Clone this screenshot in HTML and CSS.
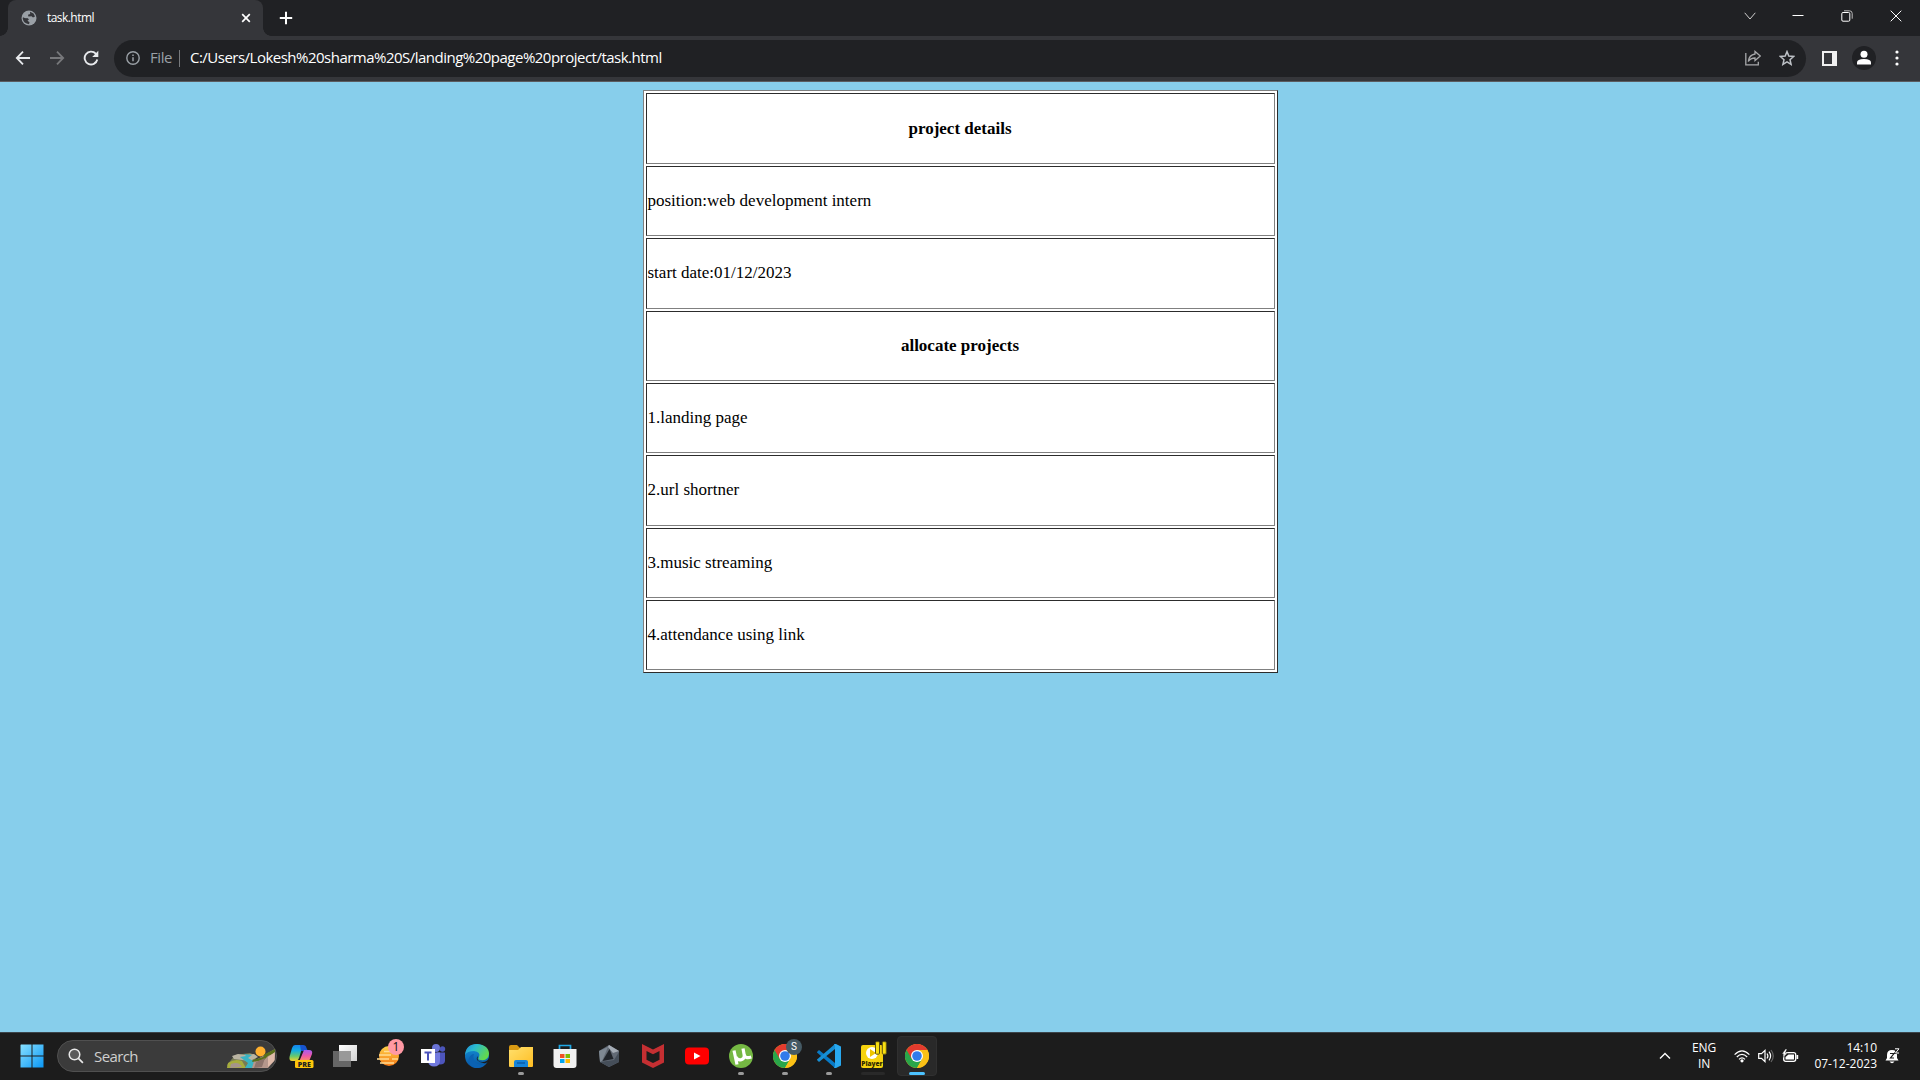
FILE: index.html
```html
<!DOCTYPE html>
<html lang="en">
<head>
<meta charset="utf-8">
<title>task.html</title>
<link rel="stylesheet" href="styles.css">
</head>
<body>
<header class="browser">
  <div class="tabstrip">
    <div class="tab">
      <svg class="globe" width="16" height="16" viewBox="0 0 16 16"><circle cx="8" cy="8" r="7.5" fill="#9aa0a6"/><path d="M2 7.200Q4.500 8.500 6.200 8L8 9.200 6.500 10.800 8.500 12.200 8 14.200Q2.500 13.500 1.700 8.500zM9 1.800L12.500 3.400 14 6.400 12 7.600 10.500 6.200 7.400 6.600 7 4.800 9.200 4z" fill="#35363a"/></svg>
      <span class="tab-title">task.html</span>
      <svg class="tab-close" width="10" height="10" viewBox="0 0 10 10"><path d="M1.2 1.2l7.6 7.6M8.8 1.2L1.2 8.8" stroke="#fff" stroke-width="1.7"/></svg>
    </div>
    <svg class="newtab" width="14" height="14" viewBox="0 0 14 14"><path d="M7 .8v12.4M.8 7h12.4" stroke="#fff" stroke-width="2"/></svg>
    <div class="window-controls">
      <svg width="12" height="12" viewBox="0 0 12 12"><path d="M.7 2.8L6 9l5.3-6.2" fill="none" stroke="#d0d0d0" stroke-width="1"/></svg>
      <svg width="12" height="12" viewBox="0 0 12 12"><path d="M.5 5.5h11" stroke="#fff"/></svg>
      <svg width="12" height="12" viewBox="0 0 12 12"><rect x=".8" y="2.5" width="8" height="8.7" rx="1.2" fill="none" stroke="#fff"/><path d="M3 .8h5.5q2.7 0 2.7 2.7v5.2" fill="none" stroke="#bbb"/></svg>
      <svg width="12" height="12" viewBox="0 0 12 12"><path d="M.7.7l10.6 10.6M11.3.7L.7 11.3" stroke="#fff"/></svg>
    </div>
  </div>
  <div class="toolbar">
    <svg class="nav" width="16" height="16" viewBox="0 0 16 16"><path d="M15 8H2.5M8 1.7L1.8 8 8 14.3" fill="none" stroke="#e8eaed" stroke-width="1.8"/></svg>
    <svg class="nav" width="16" height="16" viewBox="0 0 16 16"><path d="M1 8h12.500M8 1.700L14.200 8 8 14.300" fill="none" stroke="#77787b" stroke-width="1.8"/></svg>
    <svg class="nav" width="16" height="16" viewBox="0 0 16 16"><path d="M14.300 9.500A6.400 6.400 0 1 1 12.800 3.700L14 5" fill="none" stroke="#e8eaed" stroke-width="1.900"/><path d="M15.300.8v6.100H9.200z" fill="#e8eaed"/></svg>
    <div class="omnibox">
      <svg width="14" height="14" viewBox="0 0 14 14"><circle cx="7" cy="7" r="6.200" fill="none" stroke="#9aa0a6" stroke-width="1.400"/><path d="M7 6.200v4M7 3.500V5" stroke="#9aa0a6" stroke-width="1.500"/></svg>
      <span class="scheme">File</span>
      <span class="divider"></span>
      <span class="url">C:/Users/Lokesh%20sharma%20S/landing%20page%20project/task.html</span>
      <svg class="share" width="16" height="16" viewBox="0 0 16 16"><path d="M.8 3v11.800h12.500v-3" fill="none" stroke="#a7a8aa" stroke-width="1.300"/><path d="M10 4V1.500L15.300 6 10 10.500V8Q5.500 8 3.300 11.500 4 5 10 4z" fill="none" stroke="#a7a8aa" stroke-width="1.300"/></svg>
      <svg class="star" width="16" height="16" viewBox="0 0 16 16"><path d="M8 1.600l1.800 4.500 4.900.4-3.700 3.200 1.100 4.700L8 11.900l-4.100 2.500L5 9.700 1.300 6.500l4.900-.4z" fill="none" stroke="#bdc1c6" stroke-width="1.500"/></svg>
    </div>
    <svg class="panel" width="15" height="15" viewBox="0 0 15 15"><path fill="#f1f1f1" d="M0 0h15v15H0z"/><path fill="#35363a" d="M2 2h8v11H2z"/></svg>
    <svg class="avatar" width="24" height="24" viewBox="0 0 24 24"><circle cx="12" cy="12" r="12" fill="#202124"/><circle cx="12" cy="8.300" r="3.500" fill="#fff"/><path d="M5 18.500v-2Q5 13 12 13t7 3.500v2z" fill="#fff"/></svg>
    <svg class="dots" width="4" height="16" viewBox="0 0 4 16"><g fill="#fff"><circle cx="2" cy="2" r="1.600"/><circle cx="2" cy="8" r="1.600"/><circle cx="2" cy="14" r="1.600"/></g></svg>
  </div>
</header>

<main class="page">
  <table class="details" border="1">
    <tr class="tall first"><th>project details</th></tr>
    <tr><td>position:web development intern</td></tr>
    <tr class="tall"><td>start date:01/12/2023</td></tr>
    <tr><th>allocate projects</th></tr>
    <tr><td>1.landing page</td></tr>
    <tr class="tall"><td>2.url shortner</td></tr>
    <tr><td>3.music streaming</td></tr>
    <tr><td>4.attendance using link</td></tr>
  </table>
</main>

<footer class="taskbar">
  <svg class="start" width="24" height="24" viewBox="0 0 24 24"><defs><linearGradient id="win" x2="1" y2="1" gradientUnits="userSpaceOnUse" x1="0" y1="0" gradientTransform="scale(24)"><stop stop-color="#8be2ff"/><stop offset="1" stop-color="#0795f5"/></linearGradient></defs><path fill="url(#win)" d="M1 .5h10.500V11.500H.5V1zM12.500.5h11v11h-11zM.5 12.500h11v11h-11zM12.500 12.500h11v11h-11z"/></svg>
  <div class="search">
    <svg width="16" height="16" viewBox="0 0 16 16"><circle cx="6.500" cy="6.500" r="5.300" fill="#5a5a5a" stroke="#e8e8e8" stroke-width="1.500"/><path d="M10.400 10.400l4.500 4.500" stroke="#e8e8e8" stroke-width="1.700"/></svg>
    <span>Search</span>
    <svg class="scene" width="50" height="26" viewBox="0 0 50 26"><circle cx="34.500" cy="8.500" r="5" fill="#ffb02e"/><path d="M1 22L9 12 24 10 31 13 25 25H2z" fill="#777b55"/><path d="M6 13L12 11l8 1 8-1 4 3-8 4-16-2z" fill="#b9b3a2"/><path d="M2 20q7-5 14-2l4 7H1z" fill="#a7ad3d"/><path d="M5 21q8-3 11 3l-12 1z" fill="#a5948c"/><path d="M18 11l8 1-4 3 7 4-2 6h-8l3-5-8-6 6-1z" fill="#39b4c4"/><path d="M26 25l2-7 9-5 12-7v11l-7 8z" fill="#b5978c"/><path d="M27 17l10-3 2-3 10-5v4l-7 3-4 4-12 2z" fill="#59701c"/><path d="M30 19l9-4-3 9-8 1z" fill="#8d746c"/><path d="M42 14l7-5-1 9-6 6z" fill="#dfbbaa"/></svg>
  </div>
  <nav class="apps">
    <div class="app"><svg width="26" height="26" viewBox="0 0 26 26"><defs><linearGradient id="co" x1="0" y1="0" x2="0" y2="1"><stop stop-color="#1683ed"/><stop offset=".35" stop-color="#12aee2"/><stop offset=".7" stop-color="#69c96b"/><stop offset="1" stop-color="#f4d22e"/></linearGradient><linearGradient id="cp" x1="0" y1="0" x2="0" y2="1"><stop stop-color="#a75cf0"/><stop offset=".5" stop-color="#ef59a7"/><stop offset="1" stop-color="#ff9b55"/></linearGradient></defs><path d="M7 2h8l-4 13q-1 3-4 3H4Q1 18 1.500 14L4 5Q5 2 7 2z" fill="url(#co)"/><path d="M12 2h3q3 0 3.500 3L20 8h-7z" fill="#1754cf"/><path d="M16 7h5q4 0 3 4l-2 5q-1 3-4 3h-7z" fill="url(#cp)"/><rect x="7" y="17" width="18.500" height="8" rx="1.500" fill="#ffc60a"/><text x="16.250" y="23.700" text-anchor="middle" class="pre">PRE</text></svg></div>
    <div class="app"><svg width="26" height="26" viewBox="0 0 26 26"><defs><linearGradient id="tv" x2="1" y2="1"><stop stop-color="#fff"/><stop offset="1" stop-color="#d2d2d2"/></linearGradient></defs><path d="M7 2h18v16H7z" fill="url(#tv)"/><path d="M1 8h18v16H1z" fill="#666"/><path d="M7 8h12v10H7z" fill="#999"/></svg></div>
    <div class="app"><svg width="28" height="28" viewBox="0 0 28 28"><defs><linearGradient id="sun" x2="0" y2="1"><stop stop-color="#ffd24a"/><stop offset="1" stop-color="#f47a16"/></linearGradient></defs><circle cx="14" cy="14" r="10" fill="url(#sun)"/><path d="M4 13h12M2 17h12M5 21h14M9 9.500h8M17 17h6" stroke="#ffdc91" stroke-width="1.600"/></svg><span class="badge">1</span></div>
    <div class="app"><svg width="26" height="26" viewBox="0 0 26 26"><circle cx="16" cy="5" r="4" fill="#6a73d5"/><circle cx="22.500" cy="6" r="2.700" fill="#4b55ba"/><path d="M17 9.500h8v8q0 4-5 4h-4z" fill="#4d55bd"/><path d="M8 9.500h12v8q0 6-6 6-5 0-6-5z" fill="#7179de"/><path d="M1 6h14v14H1z" fill="#fff"/><path d="M4.500 9.500h7M8 9.500v8" stroke="#4b53bc" stroke-width="2"/></svg></div>
    <div class="app"><svg width="24" height="24" viewBox="0 0 24 24"><defs><linearGradient id="e1" x2="1" y2=".5"><stop stop-color="#2189d8"/><stop offset=".4" stop-color="#29bad1"/><stop offset="1" stop-color="#62d94c"/></linearGradient><linearGradient id="e2" x2="0" y2="1"><stop stop-color="#1695dd"/><stop offset="1" stop-color="#0753a0"/></linearGradient></defs><circle cx="12" cy="12" r="12" fill="url(#e2)"/><path d="M0 11Q1 0 12 0 24 1 24 10q-1 7-8 6-4 0-2-3 2-5-5-6-7 0-9 4z" fill="url(#e1)"/><path d="M9 10q-2 5 2 9 6 4 11-1-4 7-12 6-8-3-6-10 2-4 5-4z" fill="#0b62b3"/><path d="M13 12q-2 6 5 6 4 0 6-4l0 3-3 2q-5 1-9-3-1-2 1-4z" fill="#1c1c1c"/></svg></div>
    <div class="app running"><svg width="24" height="24" viewBox="0 0 24 24"><defs><linearGradient id="fo" x2="1" y2="1"><stop stop-color="#ffe06e"/><stop offset="1" stop-color="#ffbd22"/></linearGradient></defs><path d="M0 3q0-2 2-2h6l3 3v5H0z" fill="#d99a13"/><path d="M0 6h9l3-3h12v19q0 1-1 1H1q-1 0-1-1z" fill="url(#fo)"/><path d="M5 23v-5q0-2 2-2h10q2 0 2 2v5z" fill="#1784d8"/><path d="M8 19h8" stroke="#0c5da9" stroke-width="1.500"/></svg></div>
    <div class="app"><svg width="24" height="26" viewBox="0 0 24 26"><path d="M6.500 7V2.500h11V7" fill="none" stroke="#20a8e5" stroke-width="1.700"/><path d="M.5 6h23v16q0 3-3 3h-17q-3 0-3-3z" fill="#f1f1f1"/><path fill="#f25022" d="M7 11h4.500v4H7z"/><path fill="#7fba00" d="M12.500 11H17v4h-4.500z"/><path fill="#00a4ef" d="M7 16h4.500v4H7z"/><path fill="#ffb900" d="M12.500 16H17v4h-4.500z"/></svg></div>
    <div class="app"><svg width="24" height="24" viewBox="0 0 24 24"><path d="M12 1l10 6v11l-10 5-9-5L2 7z" fill="#626a75"/><path d="M12 1l10 6-6 2-5-6z" fill="#a5acb5"/><path d="M2 7l9-4-6 14-2 1z" fill="#7e8893"/><path d="M12.500 5l4 10-11 2z" fill="#20242a"/><path d="M3 18l14-2 5-8v10l-10 5z" fill="#454e59"/></svg></div>
    <div class="app"><svg width="24" height="26" viewBox="0 0 24 26"><path d="M1 1l11 5.500L23 1v18.500L12 25 1 19.500zM5.500 8v8.800l6.500 3.200 6.500-3.200V8L12 11.200z" fill="#c52f32" fill-rule="evenodd"/></svg></div>
    <div class="app"><svg width="24" height="18" viewBox="0 0 24 18"><rect width="24" height="17" rx="4" y=".5" fill="#f00"/><path d="M9 5.500v7l6.500-3.500z" fill="#fff"/></svg></div>
    <div class="app running"><svg width="24" height="24" viewBox="0 0 24 24"><circle cx="12" cy="12" r="12" fill="#75b843"/><path d="M5 6.500l3 14M6.800 13q2 4 6 2.500 3-1.200 2.400-4.500L14 4.500M15.300 11q1 4 7 2" fill="none" stroke="#fff" stroke-width="3.200"/></svg></div>
    <div class="app running"><svg class="chrome" width="24" height="24" viewBox="0 0 24 24"><g id="chrome"><circle cx="12" cy="12" r="12" fill="#fbc116"/><path d="M12 12L1.600 6A12 12 0 0 0 12 24l5.200-9z" fill="#29a64a"/><path d="M12 12L6.800 15 1.600 6A12 12 0 0 1 22.400 6z" fill="#e33b2e"/><path d="M12 6h10.400A12 12 0 0 1 12 24l5.200-9z" fill="#fbc116"/><circle cx="12" cy="12" r="6" fill="#fff"/><circle cx="12" cy="12" r="4.800" fill="#317bea"/></g></svg><span class="profile">S</span></div>
    <div class="app running"><svg width="24" height="24" viewBox="0 0 24 24"><path d="M0 8l2-2 16 13v5L0 8.500z" fill="#087ac6"/><path d="M0 16l2 2L18 5V0L0 15.500z" fill="#168fd5"/><path d="M17 0h2l5 2.500v19L19 24h-2l1-2V2z" fill="#28a8ef"/></svg></div>
    <div class="app idle"><svg width="28" height="30" viewBox="0 0 28 30"><rect x="2" y="4" width="22" height="23" rx="2" fill="#f6d20e"/><circle cx="13" cy="12" r="6" fill="#fff"/><path d="M11 8v8l6-4z" fill="#efc500"/><rect x="16.500" y=".7" width="4" height="12.500" rx="1" fill="#f8df10" stroke="#5c5113"/><rect x="23.300" y=".7" width="4" height="12.500" rx="1" fill="#f8df10" stroke="#5c5113"/><text class="player" x="13" y="24.500" text-anchor="middle">Player</text></svg></div>
    <div class="app active"><svg width="24" height="24" viewBox="0 0 24 24"><use href="#chrome"/></svg></div>
  </nav>
  <div class="tray">
    <svg class="more" width="12" height="8" viewBox="0 0 12 8"><path d="M1 6.500l5-5 5 5" fill="none" stroke="#fff" stroke-width="1.400"/></svg>
    <div class="lang">ENG<br>IN</div>
    <svg class="wifi" width="16" height="13" viewBox="0 0 16 13"><g fill="none" stroke="#fff" stroke-width="1.200"><path d="M.6 4.700q7.400-7.500 14.800 0M2.800 7q5.200-5.300 10.400 0M5 9.300q3-3 6 0"/></g><circle cx="8" cy="10.800" r="1.600" fill="#fff"/></svg>
    <svg class="volume" width="16" height="14" viewBox="0 0 16 14"><path d="M.7 4.700h2.800L7 1.400v11.200L3.500 9.300H.7z" fill="none" stroke="#fff" stroke-width="1.200"/><path d="M9 4.500q1.800 2.500 0 5M11 2.700q3.200 4.300 0 8.600" fill="none" stroke="#fff" stroke-width="1.200"/><path d="M13 1q4.500 6 0 12" fill="none" stroke="#666" stroke-width="1.200"/></svg>
    <svg class="battery" width="17" height="14" viewBox="0 0 17 14"><rect x="1.700" y="3.700" width="12" height="8.600" rx="2" fill="none" stroke="#fff" stroke-width="1.300"/><path d="M3.500 8l3-2.500H12v5H3.500zM14.500 6h1.700v4h-1.700z" fill="#fff"/><path d="M3.500 0L0 5h2l-1 3.500L5.500 4H3.300L5 0z" fill="#fff" stroke="#1c1c1c" stroke-width=".4"/></svg>
    <div class="clock">14:10<br>07-12-2023</div>
    <svg class="bell" width="15" height="16" viewBox="0 0 15 16"><path d="M2 7q0-5 5-5t5 5v3l1.500 2.500H.5L2 10zM4.500 13.500h5Q7 17 4.500 13.500z" fill="#fff"/><path d="M5 5.500h4L5.500 10H9" fill="none" stroke="#1c1c1c" stroke-width="1.200"/><path d="M10 .8h4L10.500 5H14" fill="none" stroke="#1c1c1c" stroke-width="2.200"/><path d="M10 .8h4L10.500 5H14" fill="none" stroke="#fff" stroke-width="1"/></svg>
  </div>
</footer>
</body>
</html>
```
FILE: styles.css
```css
* { box-sizing: border-box; }
html, body { height: 100%; }
body {
  margin: 0;
  display: flex;
  flex-direction: column;
  overflow: hidden;
  background: skyblue;
  font-family: "Open Sans", "Noto Sans", sans-serif;
}
svg { display: block; flex: none; }

/* Browser window */
.browser { height: 82px; flex: none; background: #35363a; border-bottom: 1px solid #5b5c60; color: #fff; }
.tabstrip { height: 36px; display: flex; align-items: center; padding-left: 8px; background: #202124; }
.tab {
  position: relative;
  width: 255px;
  height: 36px;
  display: flex;
  align-items: center;
  padding: 0 12px 0 13px;
  background: #35363a;
  border-radius: 8px 8px 0 0;
}
.tab::before, .tab::after {
  content: "";
  position: absolute;
  bottom: 0;
  width: 8px;
  height: 8px;
}
.tab::before { left: -8px; background: radial-gradient(circle at 0 0, #202124 7.5px, #35363a 8px); }
.tab::after { right: -8px; background: radial-gradient(circle at 100% 0, #202124 7.5px, #35363a 8px); }
.tab-title { margin-left: 10px; padding-bottom: 1px; font-size: 12px; letter-spacing: -0.55px; flex: 1; }
.newtab { margin-left: 16px; }
.window-controls { display: flex; margin-left: auto; padding: 0 18px 5px 0; gap: 37px; }
.window-controls svg:first-child { margin-right: -1px; }
.toolbar { height: 45px; display: flex; align-items: center; padding: 0 21px 1px 15px; }
.nav { margin-right: 18px; }
.nav:nth-child(3) { margin-right: 15px; }
.omnibox {
  width: 1692px;
  height: 37px;
  display: flex;
  align-items: center;
  padding: 0 11px 0 12px;
  background: #202124;
  border-radius: 19px;
}
.scheme { width: 28px; margin-left: 10px; margin-right: 1px; padding-bottom: 2px; font-size: 15px; letter-spacing: -0.4px; color: #9aa0a6; }
.divider { width: 1px; height: 17px; background: #77797c; }
.url { margin-left: 10px; padding-bottom: 2px; font-size: 15px; letter-spacing: -0.51px; white-space: nowrap; }
.share { margin-left: auto; }
.star { margin: 0 0 0 18px; }
.panel { margin-left: 16px; }
.avatar { margin-left: 15px; }
.dots { margin-left: auto; }

/* Document */
.page { flex: 1; padding-top: 8px; }
.details {
  width: 635px;
  margin: 0 auto;
  background: #fff;
  color: #000;
  font: 17px "Liberation Serif", serif;
  border: 1px solid;
  border-color: #808080 #2c2c2c #2c2c2c #808080;
  border-spacing: 2px;
}
.details tr { height: 70px; }
.details .tall { height: 71px; }
.details th, .details td { padding: 0 1px; border: 1px solid; border-color: #2c2c2c #808080 #808080 #2c2c2c; }
.details .tall td { padding-bottom: 2px; }
.details th { font-weight: 700; }

/* Taskbar */
.taskbar {
  height: 48px;
  flex: none;
  display: flex;
  align-items: center;
  padding: 0 20px 1px 20px;
  background: #1c1c1c;
  border-top: 1px solid #3c444a;
  color: #fff;
}
.search {
  width: 220px;
  height: 32px;
  margin-left: 13px;
  display: flex;
  align-items: center;
  padding-left: 10px;
  background: #3b3b3b;
  border: 1px solid #505050;
  border-radius: 16px;
  color: #cfcfcf;
  font-size: 15px;
  letter-spacing: -0.6px;
}
.search span { margin-left: 10px; }
.scene { margin-left: auto; }
.apps { display: flex; gap: 4px; margin-left: 4px; }
.app { position: relative; width: 40px; height: 40px; display: flex; align-items: center; justify-content: center; border-radius: 4px; }
.app.active { background: #292929; border: 1px solid #303030; }
.running::after, .active::after, .idle::after {
  content: "";
  position: absolute;
  left: 50%;
  bottom: 1px;
  width: 6px;
  height: 3px;
  margin-left: -3px;
  border-radius: 2px;
  background: #9a9a9a;
}
.active::after { width: 16px; margin-left: -8px; bottom: 0; background: #4cc2ff; }
.idle::after { width: 24px; margin-left: -12px; background: #292929; }
.profile, .badge {
  position: absolute;
  left: 21px;
  top: 3px;
  width: 16px;
  height: 16px;
  border-radius: 50%;
  background: #455a64;
  font: 10px/16px Roboto, sans-serif;
  text-align: center;
}
.badge { left: 19px; top: 3px; background: #ff99a4; color: #111; font: 12px/16px "Open Sans", sans-serif; }
.pre { font: 800 7px "Open Sans", sans-serif; fill: #222; }
.player { font: 800 6.5px "Open Sans", sans-serif; fill: #302900; }
.tray { display: flex; align-items: center; margin-left: auto; font-size: 12px; line-height: 16px; }
.more { margin-right: 1px; }
.lang { width: 30px; margin-left: 17px; text-align: center; letter-spacing: -0.2px; }
.wifi { margin-left: 15px; }
.volume { margin-left: 8px; }
.battery { margin-left: 8px; }
.clock { width: 70px; margin-left: 8px; text-align: right; letter-spacing: 0; white-space: nowrap; }
.bell { margin-left: 8px; }
```
